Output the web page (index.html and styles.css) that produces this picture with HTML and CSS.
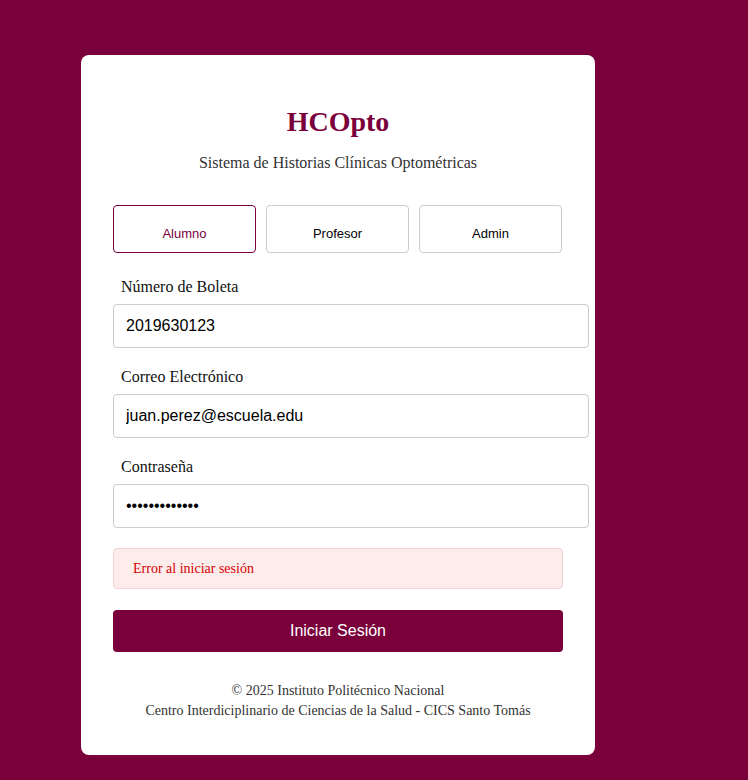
FILE: index.html
```html
<!DOCTYPE html>
<html lang="es">
<head>
<meta charset="utf-8">
<title>HCOpto</title>
<link rel="stylesheet" href="styles.css">
</head>
<body>
<div class="card">
  <h1 class="title">HCOpto</h1>
  <p class="subtitle">Sistema de Historias Clínicas Optométricas</p>
  <div class="roles">
    <button class="role active">Alumno</button>
    <button class="role">Profesor</button>
    <button class="role">Admin</button>
  </div>
  <form class="form">
    <div class="field">
      <label class="label">Número de Boleta</label>
      <input class="input" type="text" value="2019630123">
    </div>
    <div class="field">
      <label class="label">Correo Electrónico</label>
      <input class="input" type="email" value="juan.perez@escuela.edu">
    </div>
    <div class="field">
      <label class="label">Contraseña</label>
      <input class="input" type="password" value="password12345">
    </div>
    <div class="error">Error al iniciar sesión</div>
    <button class="submit" type="button">Iniciar Sesión</button>
  </form>
  <div class="footer">
    <p class="footer-line">© 2025 Instituto Politécnico Nacional</p>
    <p class="footer-line">Centro Interdiciplinario de Ciencias de la Salud - CICS Santo Tomás</p>
  </div>
</div>
</body>
</html>
```
FILE: styles.css
```css
html, body {
  margin: 0;
  padding: 0;
  background: #7a003c;
  min-height: 780px;
  font-family: "Liberation Serif", "Times New Roman", serif;
}
.card {
  box-sizing: border-box;
  width: 514px;
  height: 700px;
  margin: 55px 0 0 81px;
  padding: 32px 32px 34px;
  background: #ffffff;
  border-radius: 8px;
}
.title {
  margin: 19px 0 0;
  font-size: 28px;
  line-height: 32px;
  font-weight: bold;
  color: #7a003c;
  text-align: center;
}
.subtitle {
  margin: 16px 0 0;
  font-size: 16px;
  line-height: 18px;
  color: #333333;
  text-align: center;
}
.roles {
  display: flex;
  gap: 10px;
  margin-top: 33px;
  width: 450px;
}
.role {
  box-sizing: border-box;
  width: 143px;
  height: 48px;
  padding: 8px 0 0;
  background: #ffffff;
  border: 1px solid #cccccc;
  border-radius: 4px;
  font-family: "Liberation Sans", Arial, sans-serif;
  font-size: 13px;
  color: #000000;
}
.role.active {
  border-color: #7a003c;
  color: #7a003c;
}
.form {
  margin-top: 25px;
}
.field {
  margin-bottom: 20px;
}
.label {
  display: block;
  padding-left: 8px;
  font-size: 16px;
  line-height: 18px;
  color: #111111;
  margin-bottom: 8px;
}
.input {
  display: block;
  box-sizing: border-box;
  width: 476px;
  height: 44px;
  padding: 0 12px;
  border: 1px solid #cccccc;
  border-radius: 4px;
  font-family: "Liberation Sans", Arial, sans-serif;
  font-size: 16px;
  color: #000000;
  background: #ffffff;
}
.error {
  box-sizing: border-box;
  width: 450px;
  height: 41px;
  padding: 0 19px;
  display: flex;
  align-items: center;
  background: #fdecec;
  border: 1px solid #f6d3d5;
  border-radius: 4px;
  font-size: 14px;
  color: #d40000;
}
.submit {
  display: block;
  width: 450px;
  height: 42px;
  margin-top: 21px;
  background: #7a003c;
  border: none;
  border-radius: 4px;
  color: #ffffff;
  font-family: "Liberation Sans", Arial, sans-serif;
  font-size: 16px;
}
.footer {
  margin-top: 29px;
  text-align: center;
  width: 450px;
}
.footer-line {
  margin: 0;
  font-size: 14px;
  line-height: 20px;
  color: #333333;
}
```
